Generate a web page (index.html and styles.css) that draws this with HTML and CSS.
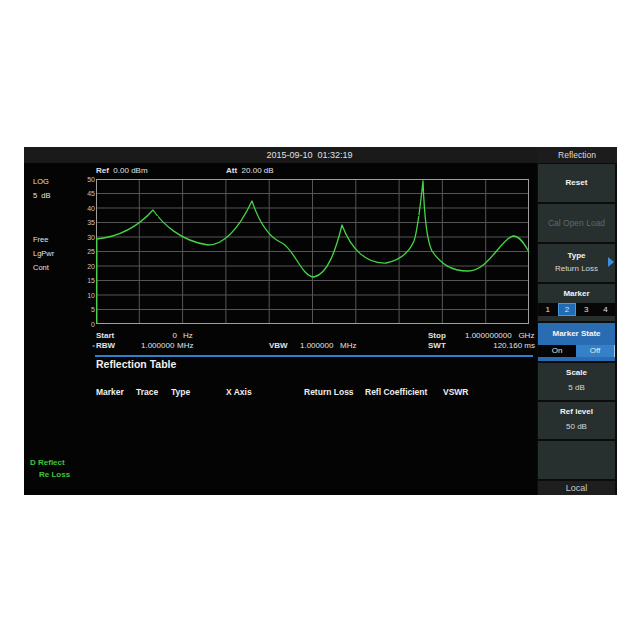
FILE: index.html
```html
<!DOCTYPE html>
<html>
<head>
<meta charset="utf-8">
<link rel="stylesheet" href="styles.css">
</head>
<body>
<div class="screen">
  <div class="main">
    <div class="topbar">2015-09-10&nbsp;&nbsp;01:32:19</div>
    <div class="body">
      <div class="left">
        <div class="grp"><div>LOG</div><div>5&nbsp;&nbsp;dB</div></div>
        <div class="grp g2"><div>Free</div><div>LgPwr</div><div>Cont</div></div>
        <div class="legend"><div>D Reflect</div><div class="ind">Re Loss</div></div>
      </div>
      <div class="center">
        <div class="hdr"><span class="ref"><b>Ref</b>&nbsp; 0.00 dBm</span><span class="att"><b>Att</b>&nbsp; 20.00 dB</span></div>
        <svg class="plot" width="457" height="145" viewBox="-16 0 457 145">
          <defs>
            <filter id="jit" filterUnits="userSpaceOnUse" x="-6" y="-6" width="446" height="157">
              <feTurbulence type="fractalNoise" baseFrequency="0.8" numOctaves="1" seed="4" result="n"/>
              <feDisplacementMap in="SourceGraphic" in2="n" scale="1.8" xChannelSelector="R" yChannelSelector="G"/>
            </filter>
          </defs>
          <g class="grid">
            <line x1="0" y1="14.5" x2="433" y2="14.5"/>
            <line x1="0" y1="29" x2="433" y2="29"/>
            <line x1="0" y1="43.5" x2="433" y2="43.5"/>
            <line x1="0" y1="58" x2="433" y2="58"/>
            <line x1="0" y1="72.5" x2="433" y2="72.5"/>
            <line x1="0" y1="87" x2="433" y2="87"/>
            <line x1="0" y1="101.5" x2="433" y2="101.5"/>
            <line x1="0" y1="116" x2="433" y2="116"/>
            <line x1="0" y1="130.5" x2="433" y2="130.5"/>
            <line x1="43.3" y1="0" x2="43.3" y2="145"/>
            <line x1="86.6" y1="0" x2="86.6" y2="145"/>
            <line x1="129.9" y1="0" x2="129.9" y2="145"/>
            <line x1="173.2" y1="0" x2="173.2" y2="145"/>
            <line x1="216.5" y1="0" x2="216.5" y2="145"/>
            <line x1="259.8" y1="0" x2="259.8" y2="145"/>
            <line x1="303.1" y1="0" x2="303.1" y2="145"/>
            <line x1="346.4" y1="0" x2="346.4" y2="145"/>
            <line x1="389.7" y1="0" x2="389.7" y2="145"/>
          </g>
          <g class="border">
            <line x1="0" y1="0.5" x2="433" y2="0.5"/>
            <line x1="0" y1="144.5" x2="433" y2="144.5"/>
            <line x1="0.5" y1="0" x2="0.5" y2="145"/>
            <line x1="432.5" y1="0" x2="432.5" y2="145"/>
          </g>
          <g class="ylab">
            <text x="-1" y="2.5">50</text>
            <text x="-1" y="17">45</text>
            <text x="-1" y="31.5">40</text>
            <text x="-1" y="46">35</text>
            <text x="-1" y="60.5">30</text>
            <text x="-1" y="75">25</text>
            <text x="-1" y="89.5">20</text>
            <text x="-1" y="104">15</text>
            <text x="-1" y="118.5">10</text>
            <text x="-1" y="133">5</text>
            <text x="-1" y="147.5">0</text>
          </g>
          <path class="trace" filter="url(#jit)" d="M0.8,145 L0.8,60 C20,58 40,50 57,31 C66,44 84,62 112,66 C130,66 145,45 156,22 C162,40 172,58 186,64 C198,70 206,98 218,98 C232,95 240,70 246,46 C255,70 270,85 290,84 C300,82 312,76 318,62 C322,50 325,20 327,2 C328,30 330,60 336,72 C345,85 355,92 372,92 C392,92 405,60 417,57 C425,57 430,68 433,73"/>
        </svg>
        <div class="info">
          <span></span><b>Start</b><span class="r">0</span><span class="u1">Hz</span>
          <span></span><span></span><span></span>
          <b>Stop</b><span>1.000000000&nbsp;&nbsp; GHz</span>
          <span class="dot">•</span><b>RBW</b><span>1.000000</span><span>MHz</span>
          <b>VBW</b><span>1.000000</span><span>MHz</span>
          <b>SWT</b><span class="r">120.160 ms</span>
        </div>
        <div class="sep"></div>
        <div class="ttitle">Reflection Table</div>
        <div class="thead">
          <span>Marker</span><span>Trace</span><span>Type</span><span>X Axis</span><span>Return Loss</span><span>Refl Coefficient</span><span>VSWR</span>
        </div>
      </div>
    </div>
  </div>
  <div class="side">
    <div class="shead">Reflection</div>
    <div class="btn b-reset"><b>Reset</b></div>
    <div class="btn b-cal">Cal Open Load</div>
    <div class="btn b-type"><b>Type</b><span>Return Loss</span><i class="arrow"></i></div>
    <div class="btn b-marker"><b>Marker</b>
      <div class="mrow"><span>1</span><span class="sel">2</span><span>3</span><span>4</span></div>
    </div>
    <div class="btn b-state"><b>Marker State</b>
      <div class="srow"><span class="on">On</span><span class="off">Off</span></div>
    </div>
    <div class="btn b-two"><b>Scale</b><span>5 dB</span></div>
    <div class="btn b-two"><b>Ref level</b><span>50 dB</span></div>
    <div class="btn b-empty"></div>
    <div class="local">Local</div>
  </div>
</div>
</body>
</html>
```
FILE: styles.css
```css
html, body {
  margin: 0;
  padding: 0;
  background: #ffffff;
}
body {
  font-family: "Liberation Sans", Arial, sans-serif;
  color: #d8d8d8;
}
.screen {
  margin: 147px 0 0 24px;
  width: 593px;
  height: 348px;
  display: flex;
  background: #040404;
}
.main {
  width: 513px;
  display: flex;
  flex-direction: column;
}
.topbar {
  height: 16px;
  line-height: 17px;
  background: #1a1a1a;
  text-align: center;
  font-size: 9px;
  color: #e0e0e0;
  padding-left: 58px;
}
.body {
  flex: 1;
  display: flex;
}
.left {
  width: 56px;
  display: flex;
  flex-direction: column;
  font-size: 7.5px;
  line-height: 14px;
  color: #e2e2e2;
}
.grp {
  padding-left: 9px;
}
.grp:first-child {
  padding-top: 12px;
}
.g2 {
  margin-top: 30px;
}
.legend {
  margin-top: auto;
  padding: 0 0 14px 6px;
  color: #3cc43c;
  font-size: 8px;
  font-weight: bold;
  line-height: 12px;
}
.legend .ind {
  padding-left: 9px;
}
.center {
  width: 457px;
  display: flex;
  flex-direction: column;
}
.hdr {
  height: 16px;
  line-height: 16px;
  font-size: 8px;
  display: flex;
  color: #e2e2e2;
}
.ref {
  width: 130px;
  padding-left: 16px;
}
.plot {
  display: block;
  overflow: visible;
}
.grid line {
  stroke: #555555;
  stroke-width: 1;
}
.border line {
  stroke: #a0a0a0;
  stroke-width: 1;
}
.ylab text {
  fill: #c4c4c4;
  font-size: 7px;
  text-anchor: end;
  font-family: "Liberation Sans", Arial, sans-serif;
}
.trace {
  fill: none;
  stroke: #46d446;
  stroke-width: 1.3;
  stroke-linejoin: round;
}
.info {
  display: grid;
  grid-template-columns: 16px 45px 36px 92px 31px 40px 88px 37px 70px;
  padding-top: 7px;
  font-size: 8px;
  line-height: 10px;
  color: #e2e2e2;
}
.info .r {
  text-align: right;
}
.info .u1 {
  padding-left: 6px;
}
.info .dot {
  color: #3a8de0;
  text-align: right;
  padding-right: 1px;
}
.sep {
  margin: 4px 0 0 15px;
  width: 438px;
  height: 2px;
  background: #2f7fcf;
}
.ttitle {
  padding-left: 16px;
  font-size: 10.5px;
  font-weight: bold;
  line-height: 14px;
  color: #f0f0f0;
}
.thead {
  margin-top: 15px;
  padding-left: 16px;
  display: grid;
  grid-template-columns: 40px 35px 55px 78px 61px 78px auto;
  font-size: 8.5px;
  font-weight: bold;
  line-height: 12px;
  color: #eeeeee;
}
.side {
  width: 80px;
  display: flex;
  flex-direction: column;
  background: #0c0c0c;
}
.shead {
  height: 16px;
  line-height: 17px;
  background: #1c1c1c;
  text-align: center;
  font-size: 8.5px;
  color: #dddddd;
}
.btn {
  position: relative;
  margin: 1px 2px 1px 1px;
  height: 38px;
  background: #28302f;
  display: flex;
  flex-direction: column;
  align-items: center;
  font-size: 8px;
  color: #d8d8d8;
}
.btn b {
  color: #f4f4f4;
}
.b-reset {
  justify-content: center;
  margin-top: 1px;
}
.b-cal {
  justify-content: center;
  color: #5d6968;
  font-size: 8.5px;
}
.b-type {
  padding-top: 5px;
  height: 33px;
  line-height: 13px;
}
.arrow {
  position: absolute;
  right: 1px;
  top: 13px;
  width: 0;
  height: 0;
  border-top: 5px solid transparent;
  border-bottom: 5px solid transparent;
  border-left: 6px solid #3b8fe0;
}
.b-marker {
  padding-top: 3px;
  height: 35px;
  line-height: 13px;
}
.mrow {
  margin-top: 3px;
  width: 100%;
  height: 13px;
  background: #070707;
  display: grid;
  grid-template-columns: repeat(4, 1fr);
  text-align: center;
  line-height: 13px;
  color: #e0e0e0;
}
.mrow .sel {
  background: #1f6cb5;
  box-shadow: inset 0 0 0 1px #4796de;
  margin: 0 1px;
}
.b-state {
  background: #2a6cb2;
  padding-top: 4px;
  height: 34px;
  line-height: 13px;
}
.srow {
  margin-top: 5px;
  width: 100%;
  height: 12px;
  display: grid;
  grid-template-columns: 38px 1fr;
  line-height: 12px;
  text-align: center;
}
.srow .on {
  background: #050505;
  color: #e0e0e0;
}
.srow .off {
  background: #3481c9;
  color: #e8e8e8;
  border-right: 1px solid #a9cbed;
}
.b-two {
  height: 35px;
  padding-top: 2px;
  line-height: 15px;
}
.local {
  margin: 1px 2px 0 1px;
  flex: 1;
  background: #1e1e1e;
  text-align: center;
  font-size: 9px;
  line-height: 14px;
  color: #cccccc;
}
```
